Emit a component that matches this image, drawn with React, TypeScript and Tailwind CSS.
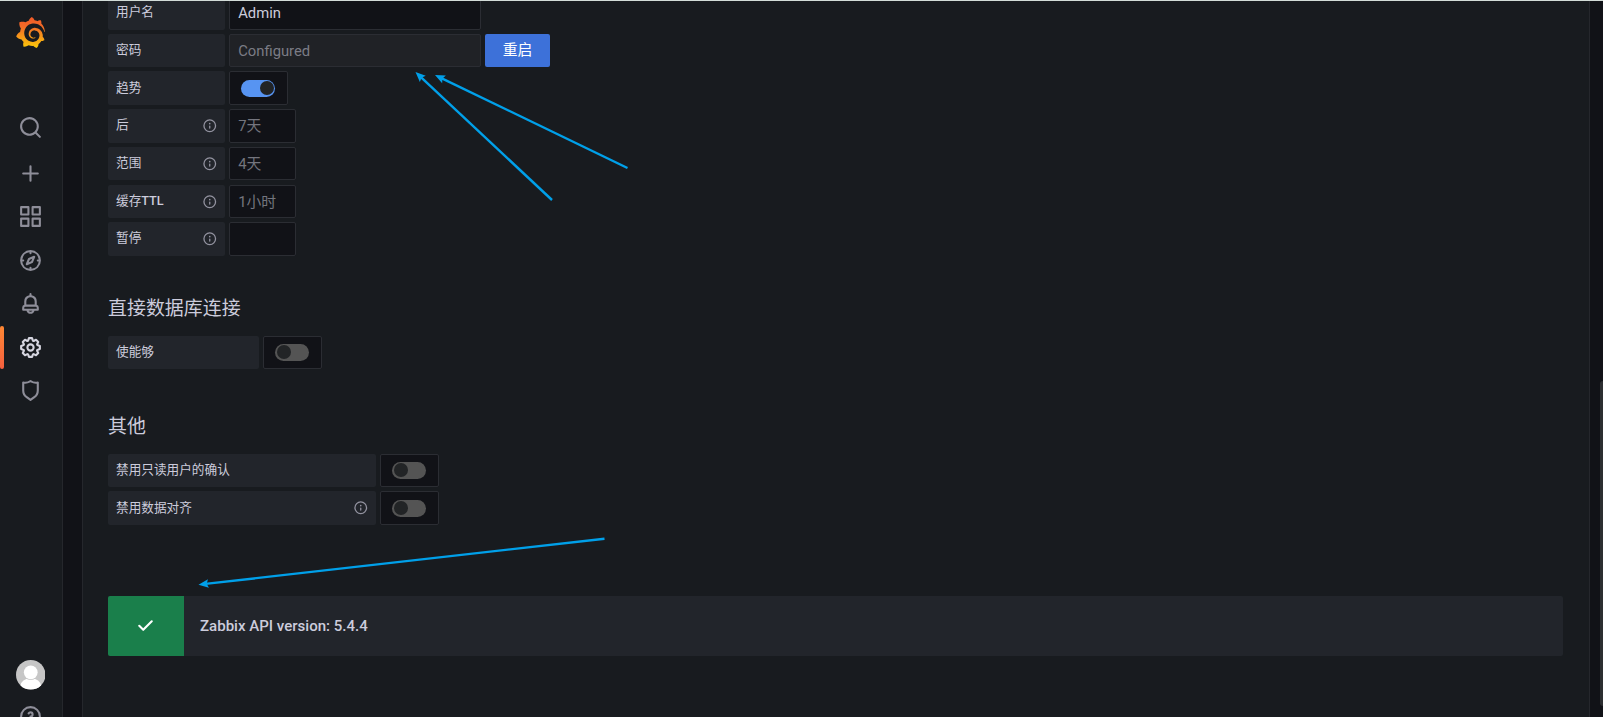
import React from "react";
import { SiGrafana } from "react-icons/si";

const icons = {
  search:
    "M21.71,20.29,18,16.61A9,9,0,1,0,16.61,18l3.68,3.68a1,1,0,0,0,1.42,0A1,1,0,0,0,21.71,20.29ZM11,18a7,7,0,1,1,7-7A7,7,0,0,1,11,18Z",
  plus: "M19,11H13V5a1,1,0,0,0-2,0v6H5a1,1,0,0,0,0,2h6v6a1,1,0,0,0,2,0V13h6a1,1,0,0,0,0-2Z",
  apps: "M10,13H3a1,1,0,0,0-1,1v7a1,1,0,0,0,1,1h7a1,1,0,0,0,1-1V14A1,1,0,0,0,10,13ZM9,20H4V15H9ZM21,2H14a1,1,0,0,0-1,1v7a1,1,0,0,0,1,1h7a1,1,0,0,0,1-1V3A1,1,0,0,0,21,2ZM20,9H15V4h5Zm1,4H14a1,1,0,0,0-1,1v7a1,1,0,0,0,1,1h7a1,1,0,0,0,1-1V14A1,1,0,0,0,21,13Zm-1,7H15V15h5ZM10,2H3A1,1,0,0,0,2,3v7a1,1,0,0,0,1,1h7a1,1,0,0,0,1-1V3A1,1,0,0,0,10,2ZM9,9H4V4H9Z",
  compass:
    "M12,2A10,10,0,1,0,22,12,10,10,0,0,0,12,2Zm1,17.93V19a1,1,0,0,0-2,0v.93A8,8,0,0,1,4.07,13H5a1,1,0,0,0,0-2H4.07A8,8,0,0,1,11,4.07V5a1,1,0,0,0,2,0V4.07A8,8,0,0,1,19.93,11H19a1,1,0,0,0,0,2h.93A8,8,0,0,1,13,19.93ZM15.14,7.55l-5,2.12a1,1,0,0,0-.52.52l-2.12,5a1,1,0,0,0,.21,1.1,1,1,0,0,0,.7.29.93.93,0,0,0,.4-.08l5-2.12a1,1,0,0,0,.52-.52l2.12-5a1,1,0,0,0-1.31-1.31Zm-2.49,5.1-2.28,1,1-2.28,2.28-1Z",
  bell: "M18,13.18V10a6,6,0,0,0-5-5.91V3a1,1,0,0,0-2,0V4.09A6,6,0,0,0,6,10v3.18A3,3,0,0,0,4,16v2a1,1,0,0,0,1,1H8.14a4,4,0,0,0,7.72,0H19a1,1,0,0,0,1-1V16A3,3,0,0,0,18,13.18ZM8,10a4,4,0,0,1,8,0v3H8Zm4,10a2,2,0,0,1-1.72-1h3.44A2,2,0,0,1,12,20Zm6-3H6V16a1,1,0,0,1,1-1H17a1,1,0,0,1,1,1Z",
  cog: "M21.32,9.55l-1.89-.63.89-1.78A1,1,0,0,0,20.13,6L18,3.87a1,1,0,0,0-1.15-.19l-1.78.89-.63-1.89A1,1,0,0,0,13.5,2h-3a1,1,0,0,0-.95.68L8.92,4.57,7.14,3.68A1,1,0,0,0,6,3.87L3.87,6a1,1,0,0,0-.19,1.15l.89,1.78-1.89.63A1,1,0,0,0,2,10.5v3a1,1,0,0,0,.68.95l1.89.63-.89,1.78A1,1,0,0,0,3.87,18L6,20.13a1,1,0,0,0,1.15.19l1.78-.89.63,1.89a1,1,0,0,0,.95.68h3a1,1,0,0,0,.95-.68l.63-1.89,1.78.89A1,1,0,0,0,18,20.13L20.13,18a1,1,0,0,0,.19-1.15l-.89-1.78,1.89-.63A1,1,0,0,0,22,13.5v-3A1,1,0,0,0,21.32,9.55ZM20,12.78l-1.2.4A2,2,0,0,0,17.64,16l.57,1.14-1.1,1.1L16,17.64a2,2,0,0,0-2.79,1.16l-.4,1.2H11.22l-.4-1.2A2,2,0,0,0,8,17.64l-1.14.57-1.1-1.1L6.36,16A2,2,0,0,0,5.2,13.18L4,12.78V11.22l1.2-.4A2,2,0,0,0,6.36,8L5.79,6.89l1.1-1.1L8,6.36A2,2,0,0,0,10.82,5.2l.4-1.2h1.56l.4,1.2A2,2,0,0,0,16,6.36l1.14-.57,1.1,1.1L17.64,8a2,2,0,0,0,1.16,2.79l1.2.4ZM12,8a4,4,0,1,0,4,4A4,4,0,0,0,12,8Zm0,6a2,2,0,1,1,2-2A2,2,0,0,1,12,14Z",
  shield:
    "M19.63,3.65a1,1,0,0,0-.84-.2,8,8,0,0,1-6.22-1.27,1,1,0,0,0-1.14,0A8,8,0,0,1,5.21,3.45a1,1,0,0,0-.84.2A1,1,0,0,0,4,4.43v7.45a9,9,0,0,0,3.77,7.33l3.65,2.6a1,1,0,0,0,1.16,0l3.65-2.6A9,9,0,0,0,20,11.88V4.43A1,1,0,0,0,19.63,3.65ZM18,11.88a7,7,0,0,1-2.93,5.7L12,19.77,8.93,17.58A7,7,0,0,1,6,11.88V5.58a10,10,0,0,0,6-1.39,10,10,0,0,0,6,1.39Z",
  info: "M12,2A10,10,0,1,0,22,12,10,10,0,0,0,12,2Zm0,18a8,8,0,1,1,8-8A8,8,0,0,1,12,20Zm0-8.5a1,1,0,0,0-1,1v3a1,1,0,0,0,2,0v-3A1,1,0,0,0,12,11.5Zm0-4a1.25,1.25,0,1,0,1.25,1.25A1.25,1.25,0,0,0,12,7.5Z",
  question:
    "M11.29,15.29a1.58,1.58,0,0,0-.12.15.76.76,0,0,0-.09.18.64.64,0,0,0-.06.18,1.36,1.36,0,0,0,0,.2.84.84,0,0,0,.08.38.9.9,0,0,0,.54.54.94.94,0,0,0,.76,0,.9.9,0,0,0,.54-.54A1,1,0,0,0,13,16a1,1,0,0,0-.29-.71A1,1,0,0,0,11.29,15.29ZM12,2A10,10,0,1,0,22,12,10,10,0,0,0,12,2Zm0,18a8,8,0,1,1,8-8A8,8,0,0,1,12,20ZM12,7A3,3,0,0,0,9.4,8.5a1,1,0,1,0,1.73,1A1,1,0,0,1,12,9a1,1,0,0,1,0,2,1,1,0,1,0,0,2,3,3,0,0,0,0-6Z",
  check:
    "M18.71,7.21a1,1,0,0,0-1.42,0L9.84,14.67,6.71,11.53A1,1,0,1,0,5.29,13l3.84,3.84a1,1,0,0,0,1.42,0l8.16-8.16A1,1,0,0,0,18.71,7.21Z",
};

type IconName = keyof typeof icons;

function Icon({ name, className }: { name: IconName; className: string }) {
  return (
    <svg viewBox="0 0 24 24" fill="currentColor" className={className}>
      <path d={icons[name]} />
    </svg>
  );
}

function NavItem({ name, active }: { name: IconName; active?: boolean }) {
  return (
    <div
      className={`relative flex h-[43.5px] w-full shrink-0 items-center justify-center ${
        active ? "text-[#d5d5df]" : "text-[#8e8e99]"
      }`}
    >
      {active && (
        <span className="absolute left-0 top-0 h-full w-1 rounded-[2px] bg-gradient-to-b from-[#ff8833] to-[#f55f3e]" />
      )}
      <Icon name={name} className="size-[25px]" />
    </div>
  );
}

function Sidebar() {
  return (
    <nav className="flex h-full w-[63px] shrink-0 flex-col items-center border-r border-[#25272c] bg-[#181b1f] pr-px">
      <svg width="0" height="0" className="absolute">
        <linearGradient id="logo" x1="0" y1="0" x2="0" y2="1">
          <stop offset="0" stopColor="#f05a28" />
          <stop offset="0.3" stopColor="#f26a27" />
          <stop offset="1" stopColor="#fbca0a" />
        </linearGradient>
      </svg>
      <SiGrafana fill="url(#logo)" className="mt-[17px] size-[31px] shrink-0" />
      <div className="mt-[58px] flex w-full flex-col">
        <NavItem name="search" />
        <div className="h-[2px]" />
        <NavItem name="plus" />
        <NavItem name="apps" />
        <NavItem name="compass" />
        <NavItem name="bell" />
        <NavItem name="cog" active />
        <NavItem name="shield" />
      </div>
      <svg viewBox="0 0 30 30" className="mt-[247.5px] size-[29.5px] shrink-0">
        <clipPath id="avatar">
          <circle cx="15" cy="15" r="15" />
        </clipPath>
        <g clipPath="url(#avatar)">
          <rect width="30" height="30" fill="#c6c6c6" />
          <ellipse cx="15" cy="26.5" rx="10.5" ry="8" fill="#fff" />
          <circle cx="15" cy="12.5" r="7.8" fill="#c6c6c6" />
          <circle cx="15" cy="12.5" r="7" fill="#fff" />
        </g>
      </svg>
      <Icon name="question" className="mt-[14.5px] size-[25px] shrink-0 text-[#8e8e99]" />
    </nav>
  );
}

function Label({
  text,
  width,
  info,
}: {
  text: React.ReactNode;
  width: string;
  info?: boolean;
}) {
  return (
    <div
      className={`flex h-full shrink-0 items-center justify-between rounded-[2px] bg-[#22252b] px-2 text-[12.65px] ${width}`}
    >
      <span>{text}</span>
      {info && <Icon name="info" className="size-[15.5px] text-[#9393a0]" />}
    </div>
  );
}

function Field({ text, className }: { text?: string; className: string }) {
  return (
    <div
      className={`flex h-full items-center rounded-[2px] border border-[#2b2d33] px-2 pt-px text-[14.8px] ${className}`}
    >
      {text}
    </div>
  );
}

function Toggle({ on }: { on?: boolean }) {
  return (
    <div className="flex h-full w-[59px] items-center justify-center rounded-[2px] border border-[#2b2d33] bg-[#111217] pr-px">
      <span
        className={`flex h-[17px] w-[34px] items-center rounded-full px-[1.5px] ${
          on ? "justify-end bg-[#5794f2]" : "bg-[#545454]"
        }`}
      >
        <span className="size-[14px] rounded-full bg-[#222426]" />
      </span>
    </div>
  );
}

function Row({ children }: { children: React.ReactNode }) {
  return <div className="flex h-[33.5px] shrink-0 gap-[4.2px]">{children}</div>;
}

function Arrow({ tip, tail }: { tip: [number, number]; tail: [number, number] }) {
  const angle = (Math.atan2(tail[1] - tip[1], tail[0] - tip[0]) * 180) / Math.PI;
  const length = Math.hypot(tail[0] - tip[0], tail[1] - tip[1]);
  return (
    <g transform={`translate(${tip[0]} ${tip[1]}) rotate(${angle})`} fill="#00a0e9">
      <path d="M0 0 L10 -4.3 L8.3 0 L10 4.3 Z" />
      <rect x="7" y="-1.2" width={length - 7} height="2.4" />
    </g>
  );
}

export default function App() {
  return (
    <div className="relative flex h-[717px] w-[1603px] overflow-hidden bg-[#111217] font-['Roboto','Noto_Sans_CJK_SC',sans-serif] text-[#ccccdc]">
      <Sidebar />

      <main className="ml-[19px] flex h-full w-[1508px] shrink-0 flex-col overflow-hidden border-x border-[#25272c] bg-[#181b1f] pl-[25px]">
        <div className="-mt-[3.9px] flex flex-col gap-[4.2px]">
          <Row>
            <Label text="用户名" width="w-[117px]" />
            <Field text="Admin" className="w-[251.5px] bg-[#111217]" />
          </Row>
          <Row>
            <Label text="密码" width="w-[117px]" />
            <Field text="Configured" className="w-[251.5px] bg-[#202226] text-[#7b7c85]" />
            <button className="h-full w-[65.5px] rounded-[2px] bg-[#3d71d9] text-[14.8px] text-white">
              重启
            </button>
          </Row>
          <Row>
            <Label text="趋势" width="w-[117px]" />
            <Toggle on />
          </Row>
          <Row>
            <Label text="后" width="w-[117px]" info />
            <Field text="7天" className="w-[67px] bg-[#111217] text-[#74757e]" />
          </Row>
          <Row>
            <Label text="范围" width="w-[117px]" info />
            <Field text="4天" className="w-[67px] bg-[#111217] text-[#74757e]" />
          </Row>
          <Row>
            <Label
              text={
                <>
                  缓存<span className="font-medium">TTL</span>
                </>
              }
              width="w-[117px]"
              info
            />
            <Field text="1小时" className="w-[67px] bg-[#111217] text-[#74757e]" />
          </Row>
          <Row>
            <Label text="暂停" width="w-[117px]" info />
            <Field className="w-[67px] bg-[#111217]" />
          </Row>
        </div>

        <h3 className="mt-[40px] text-[18.95px] leading-[26px]">直接数据库连接</h3>
        <div className="mt-[14px]">
          <Row>
            <Label text="使能够" width="w-[151px]" />
            <Toggle />
          </Row>
        </div>

        <h3 className="mt-[44.5px] text-[18.95px] leading-[26px]">其他</h3>
        <div className="mt-[14px] flex flex-col gap-[4.2px]">
          <Row>
            <Label text="禁用只读用户的确认" width="w-[268px]" />
            <Toggle />
          </Row>
          <Row>
            <Label text="禁用数据对齐" width="w-[268px]" info />
            <Toggle />
          </Row>
        </div>

        <div className="mt-[71.2px] flex h-[60px] w-[1455px] shrink-0 overflow-hidden rounded-[2px] bg-[#22252b]">
          <div className="flex w-[75.5px] items-center justify-center bg-[#1a7f4b] pb-px text-white">
            <Icon name="check" className="size-[25px]" />
          </div>
          <div className="flex items-center pl-[16.5px] pt-px text-[15.05px] font-medium">
            Zabbix API version: 5.4.4
          </div>
        </div>
      </main>

      {/* scrollbar thumb */}
      <div className="ml-auto mt-[381px] h-[325px] w-[3px] rounded-l-[3px] bg-[#2c2e31]" />

      <div className="absolute inset-x-0 top-0 h-px bg-[#d3dcd8]" />
      <svg width="1603" height="717" className="pointer-events-none absolute inset-0">
        <Arrow tip={[415.5, 72]} tail={[552, 200]} />
        <Arrow tip={[435, 75]} tail={[627.5, 168]} />
        <Arrow tip={[198.5, 584.7]} tail={[604.5, 538.7]} />
      </svg>
    </div>
  );
}
